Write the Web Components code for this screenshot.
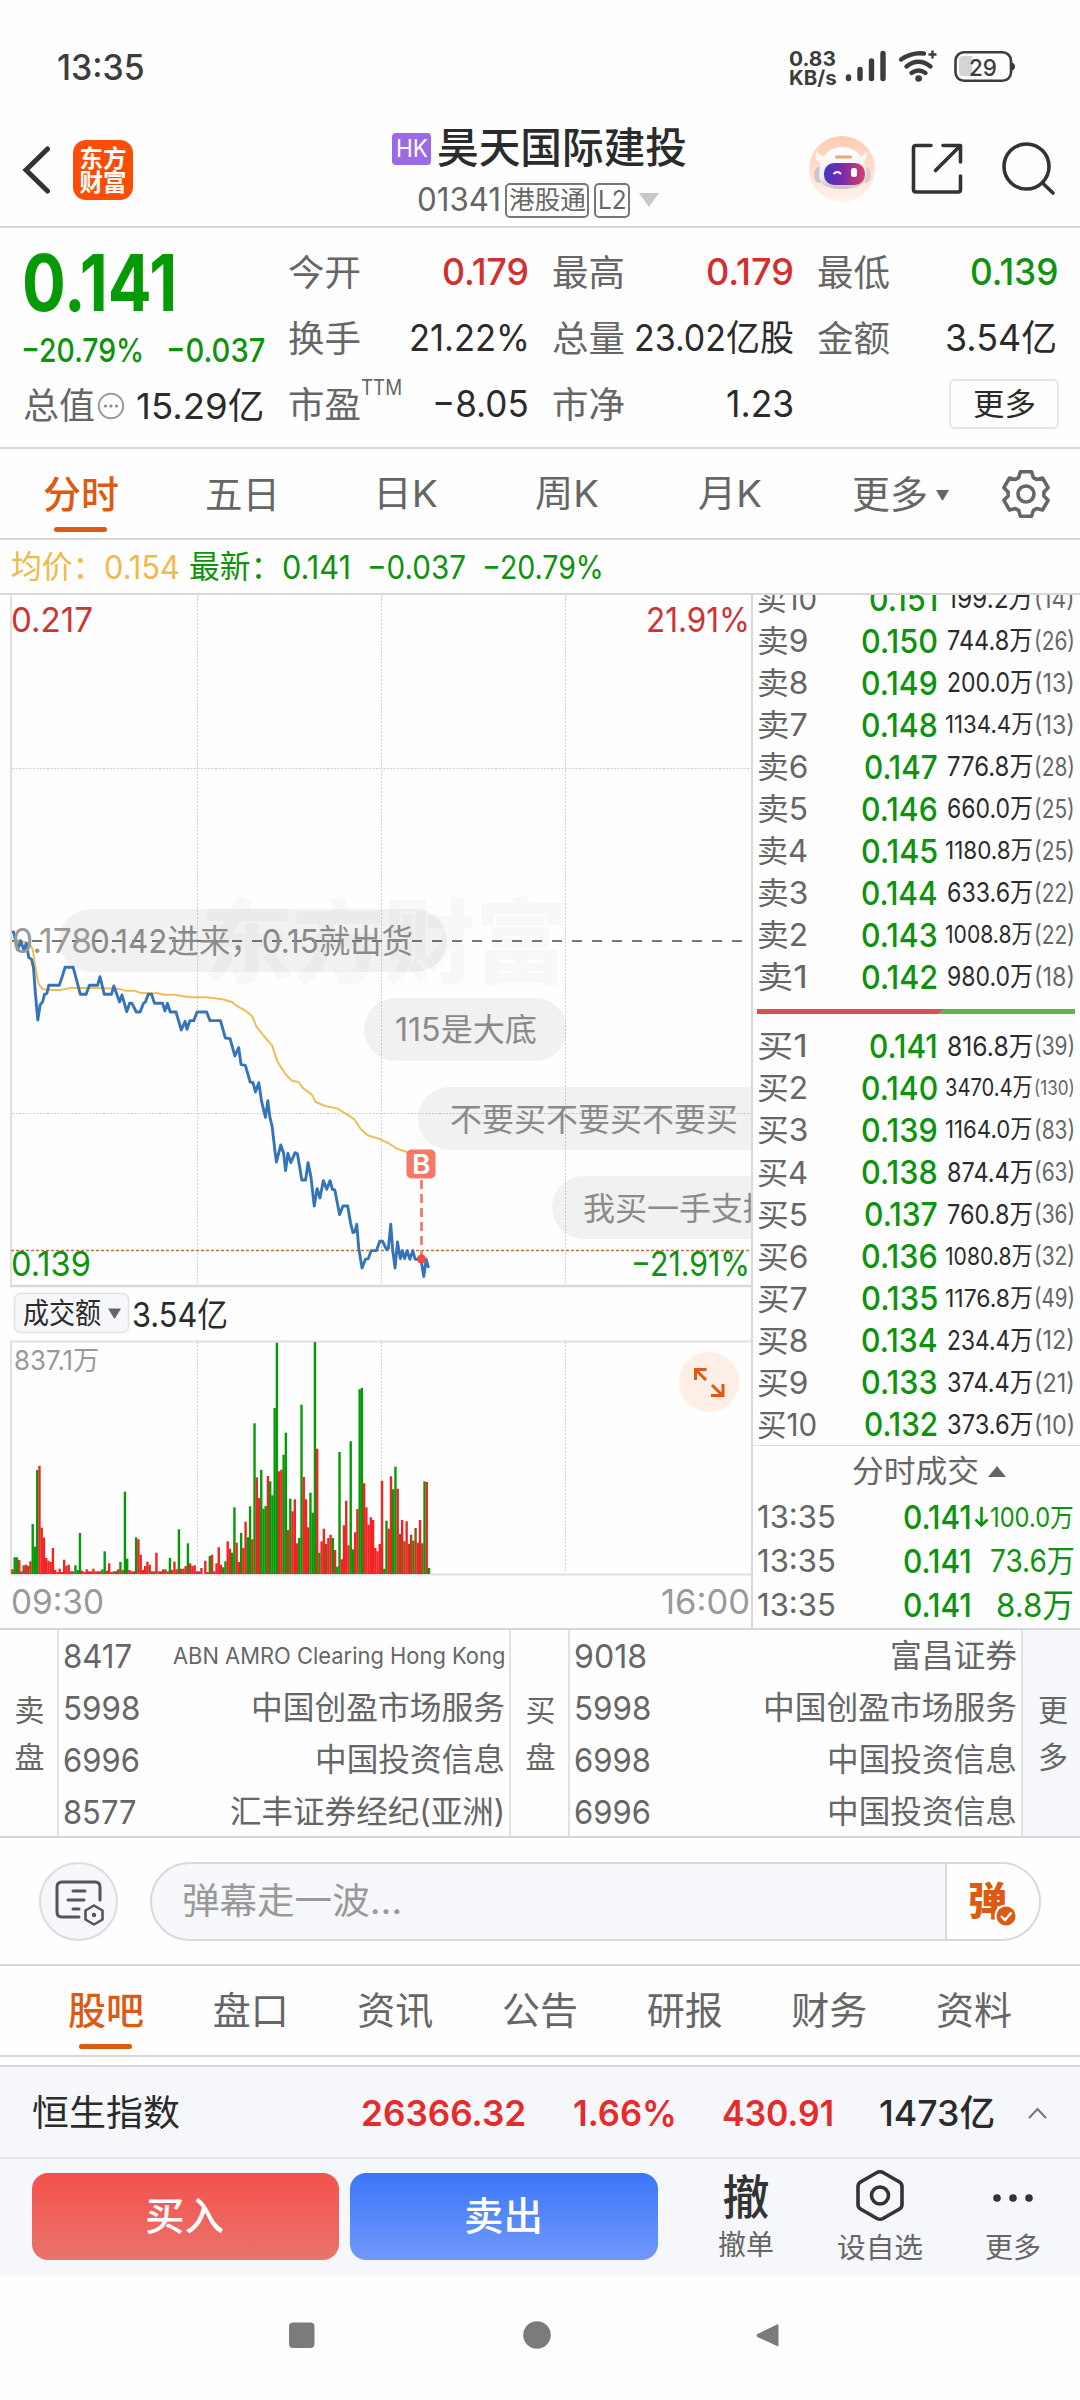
<!DOCTYPE html>
<html lang="zh-CN">
<head>
<meta charset="utf-8">
<title>昊天国际建投 01341</title>
<style>
html,body{margin:0;padding:0;background:#fefefe}
body{width:1080px;height:2400px;overflow:hidden;font-family:Inter,"Noto Sans CJK SC",sans-serif;color:#333}
.split{display:flex;height:1033px}
</style>
</head>
<body>
<status-bar></status-bar>
<app-header></app-header>
<quote-panel></quote-panel>
<period-tabs></period-tabs>
<price-legend></price-legend>
<div class="split"><chart-area></chart-area><order-book></order-book></div>
<broker-table></broker-table>
<comment-bar></comment-bar>
<section-tabs></section-tabs>
<index-strip></index-strip>
<trade-bar></trade-bar>
<system-nav></system-nav>
<script>
const RED='#d32f2f', GREEN='#0d930d', GREY='#666', DARK='#2b2b2b', ORANGE='#dc5a12';

/* Text whose advance is scaled to a given width, like a numeric field that auto-sizes. */
class FitText extends HTMLElement{
  connectedCallback(){
    if(this.shadowRoot) return;
    const w=+this.getAttribute('w');
    const r=this.attachShadow({mode:'open'});
    r.innerHTML=`<style>:host{display:block;flex:none;width:${w}px;white-space:nowrap;line-height:1.3}span{display:inline-block;transform-origin:0 50%}</style><span><slot></slot></span>`;
    const s=r.querySelector('span'), n=s.offsetWidth;
    if(n) s.style.transform=`scaleX(${w/n})`;
  }
}
customElements.define('fit-text',FitText);

const t=(text,w,size,color=GREY,weight=400,extra='')=>
  `<fit-text w="${w}" style="font-size:${size}px;color:${color};font-weight:${weight};${extra}">${text}</fit-text>`;
/* Flex row: each cell is [left, text, width, size, color, weight]. */
const row=(cells,h)=>{
  let end=0;
  return `<div style="display:flex;align-items:center;height:${h}px">`+cells.map(([x,s,w,z,c,b,e=''])=>{
    const m=x-end; end=x+w;
    return t(s,w,z,c,b,`margin-left:${m}px;${e}`);
  }).join('')+'</div>';
};
const define=(name,css,html)=>customElements.define(name,class extends HTMLElement{
  connectedCallback(){
    if(this.shadowRoot) return;
    this.attachShadow({mode:'open'}).innerHTML=`<style>:host{display:block;box-sizing:border-box}*{box-sizing:border-box}svg{display:block;flex:none}${css}</style>${html}`;
  }
});

define('status-bar',`:host{height:108px;display:flex;padding:48px 64px 0 57px;align-items:flex-start}
.net{margin-left:644px;display:flex;flex-direction:column}svg{margin-left:7px}`,
`${t('13:35',88,35,'#3c3c3c',500,'margin-top:-3px')}
<div class="net">${t('0.83',47,20,'#3c3c3c',700,'line-height:19px;margin-top:2px')}${t('KB/s',48,20,'#3c3c3c',700,'line-height:18px')}</div>
<svg width="174" height="40" viewBox="845 48 174 40" fill="none" stroke="#3c3c3c" stroke-linecap="round">
<g stroke-width="5.4"><path d="M849.5 77v1.5M861 69.500V78.500M872.500 61v17.500M884 53.500v25"/></g>
<g stroke-width="4.400"><path d="M902 59.500Q913 52 925 53.500M907.500 66.500q12-9.500 24 0M912.500 73q7-5 14 0"/></g>
<circle cx="919.600" cy="78.500" r="3.300" fill="#3c3c3c" stroke="none"/>
<path d="M933.500 50.500v8M929.500 54.500h8" stroke-width="2.400" stroke-linecap="butt"/>
<rect x="956.500" y="52.300" width="55.500" height="28.500" rx="8.500" stroke-width="2.600"/>
<path d="M964 56h9v20h-9q-4 0-4-4V60q0-4 4-4z" fill="#d4d4d4" stroke="none"/>
<path d="M1013 62.500q3 1 3 4t-3 4z" fill="#3c3c3c" stroke="none"/>
<text x="970" y="75.500" textLength="28" lengthAdjust="spacingAndGlyphs" font-size="23.500" font-weight="500" fill="#3c3c3c" stroke="none">29</text></svg>`);

define('app-header',`:host{height:120px;border-bottom:2px solid #d8d8d8;display:flex}
.logo{width:60px;height:60px;border-radius:13px;background:#fb4d05;margin:32px 0 0 22px;color:#fff;font:700 23.5px/24px "Noto Sans CJK SC";text-align:center;padding-top:5px}
.mid{width:300px;margin-left:247px}
.name,.code{display:flex;align-items:center}.name{height:40px;margin:21px 0 0 12px}
.hk{flex:none;width:39px;height:32px;background:#9b6be6;border-radius:4px;display:flex;justify-content:center;align-items:center;margin-right:6px}
.code{height:36px;margin:13px 0 0 37px}.tag{flex:none;border:2px solid #777;border-radius:5px;height:35px;display:flex;align-items:center;justify-content:center}`,
`<svg width="30" height="50" viewBox="22 146 30 50" style="margin:37px 0 0 21px"><path d="M48.500 150 27 171l21.500 21" fill="none" stroke="#333" stroke-width="5" stroke-linecap="round"/></svg>
<div class="logo">东方<br>财富</div>
<div class="mid"><div class="name"><div class="hk">${t('HK',32,24,'#fff',400)}</div>${t('昊天国际建投',250,41.5,'#2b2b2b',500)}</div>
<div class="code">${t('01341',84,32,'#666',400)}<div class="tag" style="width:84px;margin-left:4px">${t('港股通',77,25,'#666',400)}</div><div class="tag" style="width:36px;margin-left:5px">${t('L2',29,26,'#666',400)}</div>
<svg width="20" height="14" style="margin-left:9px"><path d="M0 0H20L10 14z" fill="#c8c8c8"/></svg></div></div>
<svg width="260" height="72" viewBox="805 132 260 72" style="margin:24px 0 0 125px">
<defs><linearGradient id="a" x1="0" y1="0" x2="0" y2="1"><stop stop-color="#ffcbb0"/><stop offset="1" stop-color="#fff3ed"/></linearGradient>
<linearGradient id="v"><stop stop-color="#3f35c4"/><stop offset=".45" stop-color="#7b2aa8"/><stop offset="1" stop-color="#d8406a"/></linearGradient>
<linearGradient id="h" x1="0" y1="0" x2="0" y2="1"><stop stop-color="#fff"/><stop offset=".7" stop-color="#f0eeee"/><stop offset="1" stop-color="#c6bec0"/></linearGradient></defs>
<circle cx="842" cy="169" r="33" fill="url(#a)"/>
<ellipse cx="819" cy="175" rx="5" ry="8" fill="#cbc6ca"/><ellipse cx="866" cy="175" rx="5" ry="8" fill="#d5cfd2"/>
<path d="M820 163c-5-3-5-8-3-13 1 5 5 6 10 7zM862 163c6-4 5-8 4-13-1 5-5 7-9 7z" fill="#f9f6f6"/>
<path d="M819 176c0-17 8-29 23-29s24 12 24 29c0 8-9 13-24 13s-23-5-23-13z" fill="url(#h)"/>
<rect x="835" y="155.500" width="17" height="3" rx="1.500" fill="#e7a77b"/>
<rect x="824" y="163" width="41" height="22" rx="10" fill="url(#v)"/>
<path d="M833.500 174q4-4 7.500 0" stroke="#fff" stroke-width="2" fill="none"/><rect x="851" y="168" width="6" height="9" rx="2.500" fill="#fff"/>
<g fill="none" stroke="#333" stroke-width="3.600" stroke-linecap="round" stroke-linejoin="round"><path d="M931 145.500H916q-2.500 0-2.500 2.500v41.500q0 2.500 2.500 2.500h42q2.500 0 2.500-2.500V176M943 145.500h17.500V162M960 146l-24.500 24.500"/><circle cx="1026.500" cy="166.500" r="22.500"/><path d="M1042.500 183l10.500 10"/></g></svg>`);

define('quote-panel',`:host{height:221px;border-bottom:2px solid #d8d8d8;display:flex;padding-top:11px}
.left{width:287px}.cols{width:793px;padding-top:1px}
.more{width:110px;height:50px;border:2px solid #e6e6e6;border-radius:6px;display:flex;align-items:center;justify-content:center;margin:-2px 0 0 155px}`,
`<div class="left">
${row([[22,'0.141',155,78,'#079a07',700]],88)}
${row([[21,'−20.79%',123,33,GREEN,500],[166,'−0.037',99,33,GREEN,500]],46)}
<div style="display:flex;align-items:center;height:66px">${t('总值',72,36,GREY,400,'margin-left:23px')}
<svg width="28" height="28" style="margin-left:2px"><circle cx="14" cy="14" r="12.200" fill="none" stroke="#999" stroke-width="2"/><g fill="#888"><circle cx="8.500" cy="14" r="1.600"/><circle cx="14" cy="14" r="1.600"/><circle cx="19.500" cy="14" r="1.600"/></g></svg>
${t('15.29亿',128,36,DARK,400,'margin-left:11px')}</div></div>
<div class="cols">
${row([[1,'今开',73,36],[155,'0.179',87,36.5,RED,500],[265,'最高',73,36],[419,'0.179',88,36.5,RED,500],[530,'最低',73,36],[683,'0.139',88,36.5,GREEN,500]],66)}
${row([[1,'换手',73,36],[122,'21.22%',121,36.5,DARK,400],[265,'总量',73,36],[347,'23.02亿股',160,36.5,DARK,400],[530,'金额',73,36],[658,'3.54亿',112,36.5,DARK,400]],66)}
<div style="display:flex;align-items:center;height:66px">${t('市盈',73,36,GREY,400,'margin-left:1px')}${t('TTM',41,21,GREY,400,'margin-top:-34px')}${t('−8.05',97,36.5,DARK,400,'margin-left:30px')}${t('市净',73,36,GREY,400,'margin-left:23px')}${t('1.23',68,36.5,DARK,400,'margin-left:101px')}<div class="more">${t('更多',63,31,DARK,400)}</div></div>
</div>`);

const gear=(()=>{let p='';for(let k=0;k<6;k++){const a=-90+60*k;[[18,-24],[23,-14],[23,14],[18,24]].forEach(([r,d])=>{const q=(a+d)*Math.PI/180;p+=(p?'L':'M')+(25+r*Math.cos(q)).toFixed(1)+' '+(25+r*Math.sin(q)).toFixed(1)})}return p+'z'})();
define('period-tabs',`:host{height:91px;border-bottom:2px solid #d8d8d8;display:flex;position:relative}
i{position:absolute;left:54px;top:78px;width:53px;height:5px;border-radius:3px;background:${ORANGE}}`,
`${row([[43,'分时',76,38,ORANGE,500],[205,'五日',75,38],[373,'日K',65,37],[535,'周K',64,37],[698,'月K',64,37],[852,'更多',76,38]],91)}
<svg width="13" height="11" style="margin:41px 0 0 8px"><path d="M0 0H13L6.500 11z" fill="#666"/></svg>
<svg width="50" height="50" style="margin:20px 0 0 52px" fill="none" stroke="#666" stroke-width="3.600" stroke-linejoin="round"><path d="${gear}"/><circle cx="25" cy="25" r="8"/></svg><i></i>`);

define('price-legend',`:host{height:55px;border-bottom:2px solid #d8d8d8;padding-top:1px}`,
row([[11,'均价：',93,31.5,'#f0b94a',400],[104,'0.154',76,32,'#f0b94a',400],[189,'最新：',93,31.5,GREEN,400],[282,'0.141',69,32,GREEN,400],[367,'−0.037',99,32,GREEN,400],[482,'−20.79%',122,32,GREEN,400]],53));

/* Time line: points are on a 1568-wide grid stretched to the plot. */
const price='27,152 30,165 37,210 43,182 50,210 55,190 60,232 66,238 70,262 74,340 79,420 84,374 89,366 93,343 98,340 102,316 124,316 130,290 136,262 153,262 160,300 168,343 180,343 187,316 204,316 209,290 218,343 233,343 238,318 250,366 255,345 265,395 271,370 276,370 285,396 293,396 300,370 304,366 310,343 317,343 323,370 340,370 345,393 350,370 356,396 368,396 379,450 387,424 391,448 397,422 405,422 412,396 432,396 439,422 461,422 471,474 481,476 491,528 499,503 504,554 513,556 523,606 529,608 534,636 541,608 547,665 555,712 560,662 564,710 569,740 575,815 578,846 587,795 593,820 597,872 602,820 608,848 617,818 622,822 631,900 639,900 644,848 650,890 657,978 663,926 669,954 676,902 683,928 690,902 695,928 700,930 710,1004 717,978 727,978 733,1030 738,1058 742,1055 746,1033 750,1105 757,1164 764,1138 770,1136 776,1112 787,1112 794,1084 800,1084 808,1108 812,1105 817,1033 821,1110 826,1164 831,1086 837,1136 841,1112 846,1136 851,1112 857,1138 863,1112 868,1138 880,1138 886,1190 891,1138 896,1164';
const avg='35,180 60,190 68,205 74,260 80,310 88,326 100,330 125,330 147,324 204,324 247,326 262,332 280,332 293,338 312,340 330,340 342,344 365,344 380,348 400,352 432,352 465,358 485,366 495,378 508,388 517,396 528,410 536,440 550,465 569,497 580,545 597,583 610,602 624,606 634,625 652,644 660,666 680,678 706,686 726,704 741,718 753,745 768,766 795,778 815,792 830,806 850,816 880,820';
const early='r14 g50 g50 r42 m8 m26 r28 m24 r38 g150 g82 g312 r325 r139 r109 r48 r40 r36 r78 r12 r6 r16 r6 r43 r24 r28 r8 r8 g26 g12 g123 r10 r6 r14 r8 r8 r16 r8 r8 r8 g14 g68 r10 r32 r6 m8 m8 r14 g36 r12 g247 g46 r12 r8 r8 g110 r104 r58 r12 r24 r37 r28 m8 m8 r64 r8 r8 r14 m14 r8 g48 r12 r37 r14 g134 r16 r16 r24 g92 r32 r24 r26 r8 r8 r18'.split(' ').map((s,i)=>[37.4+i*6.748,s]);
const late='r40 r6 g54 r58 r8 r32 r80 r28 g20 g38 r98 r76 g64 g200 r94 r36 g123 r78 r157 g110 g203 r104 g452 r290 r228 g312 g196 g204 r294 g278 g236 g498 g694 r308 r313 g358 g424 r132 g226 r188 r224 r92 g108 g508 r291 r224 r140 g244 g184 g696 r376 g64 r98 r136 m90 r108 r118 g108 r72 g22 g366 r44 r146 r220 r86 g398 g74 r125 r195 g554 g558 r272 r200 r148 r170 r162 r78 r68 r90 r280 g16 g160 r136 r293 g254 g322 r256 m120 r162 m98 r158 r90 m118 m100 m138 r94 r162 m92 g278 r276 g18'.split(' ').map((s,i)=>[616+i*6.71,s]);
const bars=early.concat(late).map(([x,s])=>{const h=s.slice(1)/3;return `<rect x="${(x/3-1.2).toFixed(2)}" y="${(1574-h).toFixed(1)}" width="2.4" height="${h.toFixed(1)}" fill="${{r:'#f02424',g:'#079a07',m:'#8f5514'}[s[0]]}"/>`}).join('');
const tx=(x,y,w,z,c,s,b=400)=>`<text x="${x}" y="${y}" textLength="${w}" lengthAdjust="spacingAndGlyphs" font-size="${z}" font-weight="${b}" fill="${c}">${s}</text>`;
const pill=(x,y,w)=>`<rect x="${x}" y="${y}" width="${w}" height="63" rx="31.500" fill="#000" fill-opacity=".05"/>`;
define('chart-area',`:host{width:751px;height:1033px;flex:none}`,
`<svg width="751" height="1033" viewBox="0 595 751 1033">
<text x="201" y="976" textLength="366" font-size="92" font-weight="900" font-family="Noto Sans CJK SC" fill="#000" fill-opacity=".024">东方财富</text>
<g stroke="#cfcfcf" stroke-width="1" stroke-dasharray="2 1.500"><path d="M197.500 595V1286M381.500 595V1286M565.500 595V1286M12 768.500H751M12 1113.500H751M197.500 1342V1573M381.500 1342V1573M565.500 1342V1573"/></g>
<path d="M11 595V1286M11 1341V1574" stroke="#e0e0e0" stroke-width="2"/><path d="M10 1286H751" stroke="#d8d8d8" stroke-width="2.500"/><path d="M10 1341.500H751M10 1574.500H751" stroke="#e0e0e0" stroke-width="2"/>
<path d="M12 941H751" stroke="#777" stroke-width="1.800" stroke-dasharray="10 10"/>
<path d="M11 1250.500H751" stroke="#c0703a" stroke-width="1.300" stroke-dasharray="3 2"/>
<g transform="translate(0 880) scale(.4783 .3333)" fill="none" stroke-linejoin="round"><polyline points="${avg}" stroke="#efbd58" stroke-width="2" vector-effect="non-scaling-stroke"/><polyline points="${price}" stroke="#3674b9" stroke-width="2.900" vector-effect="non-scaling-stroke"/></g>
<path d="M421.500 1180V1256" stroke="#f07a6c" stroke-width="2.800" stroke-dasharray="9 5"/><circle cx="421.500" cy="1259" r="4.500" fill="#ef4b3e"/>
<rect x="406.500" y="1149.500" width="29" height="29" rx="5" fill="#f67767"/>${tx(412,1174,18.5,27,'#fff','B',600)}
${pill(59,909,388)}${pill(364,998,203)}${pill(418,1087,360)}${pill(552,1176,240)}
${tx(12,953,80,34,'#999','0.178')}
${tx(90,953,323,33,'#8a8a8a','0.142进来，0.15就出货')}
${tx(395,1041,142,32,'#8a8a8a','115是大底')}${tx(450,1131,288,32,'#8a8a8a','不要买不要买不要买')}${tx(583,1220,192,32,'#8a8a8a','我买一手支持')}
${tx(11,632,82,34,'#cf3333','0.217',400)}${tx(646,632,104,34,'#cf3333','21.91%',400)}
${tx(11,1276,80,34,GREEN,'0.139',400)}${tx(631,1276,119,34,GREEN,'−21.91%',400)}
<rect x="14.500" y="1293.500" width="114" height="39" rx="6" fill="#f6f7fa" stroke="#dfe2e6" stroke-width="1.500"/>
${tx(23,1324,78,29,DARK,'成交额')}<path d="M108 1308.500H121L114.500 1319z" fill="#666"/>${tx(132,1327,96,34,DARK,'3.54亿')}
${tx(14,1369.500,85,27,'#999','837.1万')}
${bars}
<circle cx="709" cy="1382" r="30" fill="#feefe6"/><g fill="none" stroke="${ORANGE}" stroke-width="3"><path d="M695.500 1380V1369.500H706.500M696 1370l10 10M712 1385l10.500 10.500M723 1384V1395.500H711"/></g>
${tx(11,1614,93,33.5,'#999','09:30')}${tx(661,1614,89,33.5,'#999','16:00')}
</svg>`);

const asks=[['10','0.151','199.2万','14'],['9','0.150','744.8万','26'],['8','0.149','200.0万','13'],['7','0.148','1134.4万','13'],['6','0.147','776.8万','28'],['5','0.146','660.0万','25'],['4','0.145','1180.8万','25'],['3','0.144','633.6万','22'],['2','0.143','1008.8万','22'],['1','0.142','980.0万','18']];
const bids=[['1','0.141','816.8万','39'],['2','0.140','3470.4万','130'],['3','0.139','1164.0万','83'],['4','0.138','874.4万','63'],['5','0.137','760.8万','36'],['6','0.136','1080.8万','32'],['7','0.135','1176.8万','49'],['8','0.134','234.4万','12'],['9','0.133','374.4万','21'],['10','0.132','373.6万','10']];
const level=(side,h)=>([n,p,v,c])=>{
  const pw=p==='0.141'||p==='0.151'?69:p==='0.147'||p==='0.137'||p==='0.132'?74:77, big=v.length<7, vw=big?86:88;
  return row([[4,side+n,n.length>1?60:51,30.5],[185-pw,p,pw,33,GREEN,500],[280-vw,v,vw,big?27:24.5,DARK,400],[281,`(${c})`,41,c.length>2?20:25,GREY,400]],h);
};
const trade=(a,v,w,z)=>`<div style="display:flex;align-items:center;height:44.3px">${t('13:35',79,31.5,GREY,400,'margin-left:4px')}${t('0.141',69,33,GREEN,500,'margin-left:67px')}<svg width="16" height="22" style="margin:0 1px">${a?`<path d="M8.500 1V19M2.500 13.500l6 6 6-6" fill="none" stroke="${GREEN}" stroke-width="2.600"/>`:''}</svg><div style="flex:1;display:flex;justify-content:flex-end;padding-right:6px">${t(v,w,z,GREEN,400)}</div></div>`;
define('order-book',`:host{width:329px;height:1033px;border-left:2px solid #d8d8d8;overflow:hidden}
.asks{margin-top:-17px}.ratio{display:flex;margin:11px 0 11px 4px;width:318px;height:5px;background:#5fb24f}
.ratio i{width:186px;background:#d95050;clip-path:polygon(0 0,100% 0,calc(100% - 5px) 100%,0 100%)}
.bids{border-bottom:1px solid #e2e2e2;height:421px}.h{display:flex;align-items:center;height:48px;margin-top:1px;padding-left:99px}`,
`<div class="asks">${asks.map(level('卖',42)).join('')}</div><div class="ratio"><i></i></div>
<div class="bids">${bids.map(level('买',42.1)).join('')}</div>
<div class="h">${t('分时成交',127,31,GREY)}<svg width="18" height="11" style="margin-left:9px"><path d="M0 11 9 0l9 11z" fill="#666"/></svg></div>
${trade(1,'100.0万',84,26.5)}${trade(0,'73.6万',85,31)}${trade(0,'8.8万',78,33)}`);

const side=(label,list)=>`<div class="v"><b>${label[0]}</b><b>${label[1]}</b></div><div class="list">${list.map(([c,cw,n,w,z=32])=>`<div class="line">${t(c,cw,33)}${t(n,w,z)}</div>`).join('')}</div>`;
define('broker-table',`:host{height:210px;border-top:2px solid #d4d6da;border-bottom:2px solid #d4d6da;display:flex}
.v{flex:none;width:57px;display:flex;flex-direction:column;align-items:center;padding:57px 0 0 2px;font-size:30px;color:#666}.v b{font-weight:400;line-height:47px;height:47px}
.list{flex:none;width:454px;border:solid #dfe1e4;border-width:0 2px;padding:0 4px 0 4px}.list~.list{width:455px}.line{display:flex;justify-content:space-between;align-items:center;height:52px}
.v.m{flex:1;background:#f5f7fa;padding-left:3px}`,
side('卖盘',[['8417',69,'ABN AMRO Clearing Hong Kong',332,22.5],['5998',77,'中国创盈市场服务',254],['6996',77,'中国投资信息',190],['8577',73,'汇丰证券经纪(亚洲)',275]])+
side('买盘',[['9018',73,'富昌证券',127],['5998',77,'中国创盈市场服务',254],['6998',77,'中国投资信息',190],['6996',77,'中国投资信息',190]])+
`<div class="v m"><b>更</b><b>多</b></div>`);

define('comment-bar',`:host{height:126px;display:flex;padding:24px 0 0 39px}
.c{width:79px;height:79px;border:2px solid #dadde2;border-radius:50%;background:#f6f7fa}
.in{width:891px;height:79px;margin-left:32px;border:2px solid #d6d9de;border-radius:40px;background:#f6f7fa;display:flex;align-items:center;overflow:hidden;padding-left:30px}
.d{margin-left:auto;width:94px;height:100%;border-left:2px solid #d6d9de;background:#fefefe}`,
`<div class="c"><svg width="75" height="75" viewBox="41 1864 75 75" fill="none" stroke="#555" stroke-width="3" stroke-linecap="round"><path d="M79 1917H62q-5 0-5-5v-25q0-5 5-5h33q5 0 5 5v13M73 1891h12M68 1900h16M73 1909h6"/><path d="M94 1905.500l8.500 5v9l-8.500 5-8.500-5v-9z" stroke-width="2.600" stroke-linejoin="round"/><circle cx="94" cy="1915" r="2.200" fill="#555" stroke="none"/></svg></div>
<div class="in">${t('弹幕走一波…',220,36,'#999')}<div class="d"><svg width="91" height="75" viewBox="949 1864 91 75"><text x="970" y="1914.500" font-size="39" font-weight="900" font-family="Noto Sans CJK SC" fill="${ORANGE}">弹</text><circle cx="1008" cy="1916" r="11.500" fill="#fefefe"/><circle cx="1008" cy="1916" r="9.500" fill="${ORANGE}"/><path d="M1003 1916l4 4 6.500-7.500" fill="none" stroke="#fff" stroke-width="2.400"/></svg></div></div>`);

define('section-tabs',`:host{height:93px;border:solid #d8d8d8;border-width:2px 0;position:relative}
.r{display:flex;justify-content:space-between;align-items:center;height:89px;padding:0 68px 0 68px}
i{position:absolute;left:79px;top:78px;width:53px;height:5px;border-radius:3px;background:${ORANGE}}`,
`<div class="r">${t('股吧',76,38,ORANGE,500)}${['盘口','资讯','公告','研报','财务','资料'].map(s=>t(s,76,38)).join('')}</div><i></i>`);

define('index-strip',`:host{height:94px;margin-top:8px;border-top:2px solid #d8d8d8;background:#f6f7fa;border-bottom:2px solid #e4e6e9;display:flex}`,
`${row([[32,'恒生指数',148,36,DARK,400],[361,'26366.32',165,36,'#e52b2b',600],[573,'1.66%',104,36,'#e52b2b',600],[722,'430.91',112,36,'#e52b2b',600],[879,'1473亿',116,36,DARK,500]],92)}
<svg width="20" height="12" style="margin:40px 0 0 33px"><path d="M1 11 9.500 2 18 11" fill="none" stroke="#777" stroke-width="2"/></svg>`);

define('trade-bar',`:host{height:117px;background:#f6f7fa;display:flex;padding:14px 0 0 32px}
.b{width:307px;height:87px;border-radius:16px;display:flex;align-items:center;justify-content:center}
.buy{background:linear-gradient(#f4524b,#ea736d);padding-right:2px}.sell{background:linear-gradient(#3b76f8,#7198fb);margin-left:11px;width:308px;padding-right:1px}
.k{display:flex;flex-direction:column;align-items:center;height:90px}.k svg,.k .g{height:52px;display:flex;align-items:center}`,
`<div class="b buy">${t('买入',79,39,'#fff',500)}</div><div class="b sell">${t('卖出',79,39,'#fff',500)}</div>
<div class="k" style="width:90px;margin-left:43px"><div class="g">${t('撤',47,47,'#333',500,'line-height:48px')}</div>${t('撤单',56,28,GREY,400,'margin-top:5px')}</div>
<div class="k" style="width:100px;margin-left:39px"><svg width="52" height="54" viewBox="0 0 52 52" fill="none" stroke="#333" stroke-width="3.600" style="margin-top:-3px;margin-bottom:3px"><path d="M23 1.500q3-1.500 6 0l16.500 9.500q2.500 1.500 2.500 4.500v18q0 3-2.500 4.500L29 47.500q-3 1.500-6 0L6.500 38q-2.500-1.500-2.500-4.500v-18q0-3 2.500-4.500z" transform="translate(0 1)"/><circle cx="26" cy="25.500" r="8.500"/></svg>${t('设自选',86,28,GREY,400,'margin-top:5px')}</div>
<div class="k" style="width:90px;margin-left:38px"><svg width="50" height="52" fill="#333"><circle cx="9" cy="25" r="3.800"/><circle cx="25" cy="25" r="3.800"/><circle cx="41" cy="25" r="3.800"/></svg>${t('更多',56,28,GREY,400,'margin-top:5px')}</div>`);

define('system-nav',`:host{height:124px;display:flex;align-items:center;padding:0 0 6px 289px}`,
`<svg width="26" height="28"><rect y="1.500" width="25.500" height="25.500" rx="4" fill="#7b7b7b"/></svg>
<svg width="28" height="28" style="margin-left:208px"><circle cx="14" cy="14" r="13.800" fill="#7b7b7b"/></svg>
<svg width="26" height="28" style="margin-left:204px"><path d="M22 3.500q1.500-1 1.500 1V24q0 2-1.500 1L2.500 16q-2-1.500 0-3z" fill="#7b7b7b"/></svg>`);
</script>
</body>
</html>
